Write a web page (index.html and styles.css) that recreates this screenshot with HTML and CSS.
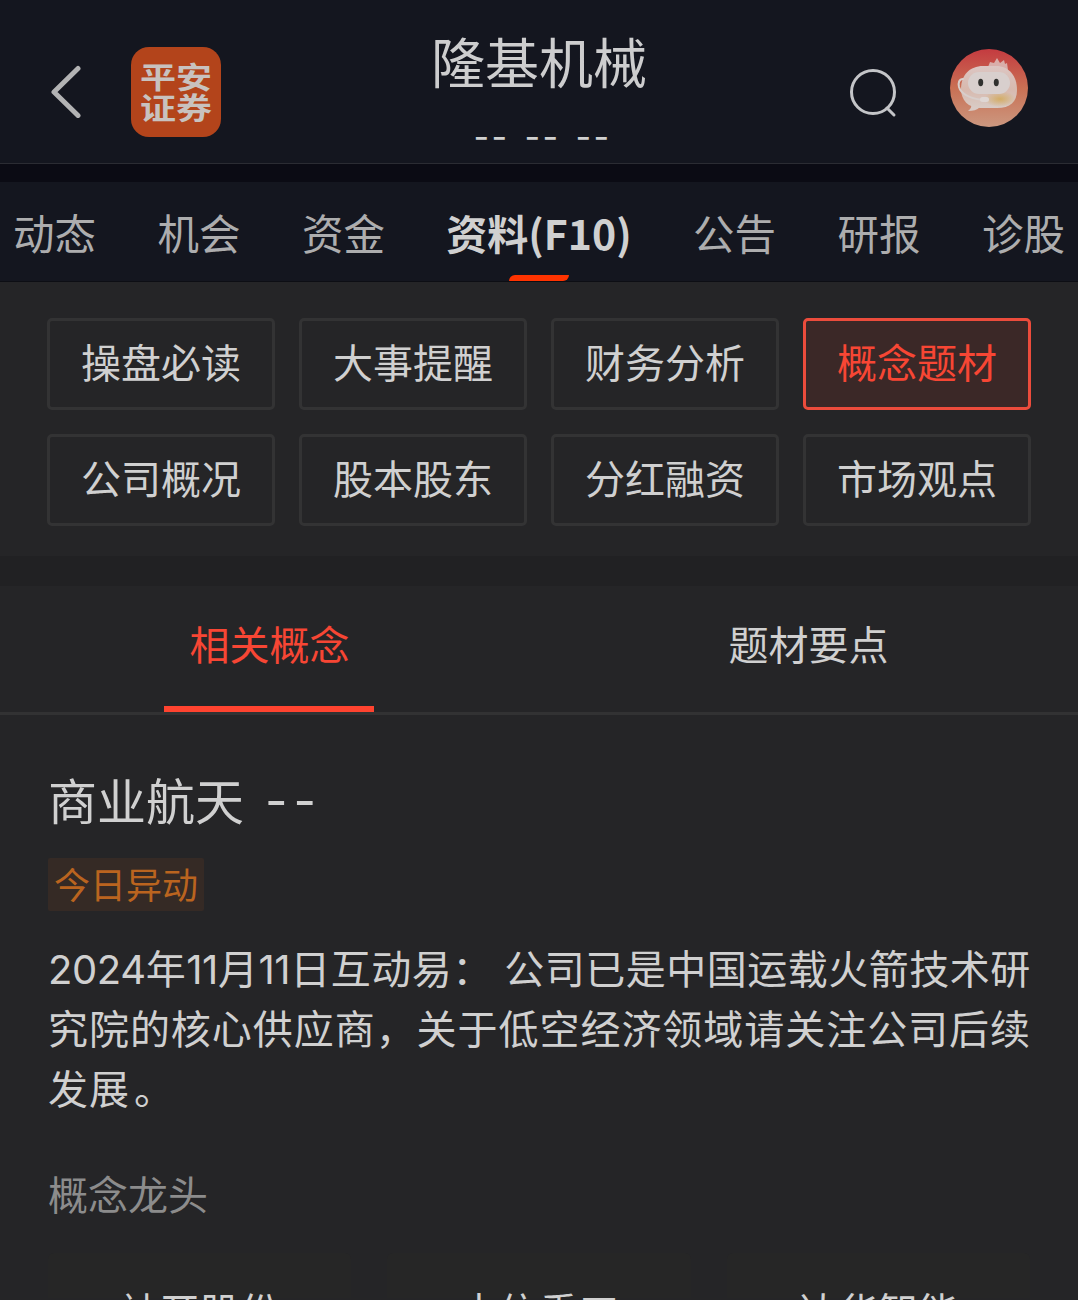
FILE: index.html
```html
<!DOCTYPE html>
<html lang="zh-CN">
    <head>
        <meta charset="UTF-8" />
        <meta name="viewport" content="width=device-width, initial-scale=1.0" />
        <title>隆基机械</title>
        <link rel="stylesheet" href="styles.css">
    </head>
    <body>
        <header class="header">
            <svg class="back" viewBox="0 0 40 60">
                <path d="M32 10.500 8 34l24 23.500" />
            </svg>
            <div class="logo"><span>平安</span><span>证券</span></div>
            <div class="stock">
                <h1>隆基机械</h1>
                <div class="quote"><span>--</span><span>--</span><span>--</span></div>
            </div>
            <svg class="search" viewBox="0 0 50 52">
                <circle cx="24" cy="24" r="21.500" />
                <path d="M38 40l7 7" />
            </svg>
            <svg class="avatar" viewBox="0 0 78 78">
                <defs>
                    <linearGradient id="sky" x1="0" y1="0" x2="0" y2="1">
                        <stop offset="0" stop-color="#c43b40" />
                        <stop offset=".5" stop-color="#c97054" />
                        <stop offset="1" stop-color="#cc9880" />
                    </linearGradient>
                    <linearGradient id="head" x1="0" y1="0" x2="0" y2="1">
                        <stop offset="0" stop-color="#dcc6c3" />
                        <stop offset=".55" stop-color="#d8b9ae" />
                        <stop offset="1" stop-color="#d8cbc5" />
                    </linearGradient>
                    <radialGradient id="glow">
                        <stop offset="0" stop-color="#d3ad66" />
                        <stop offset="1" stop-color="#d3ad66" stop-opacity="0" />
                    </radialGradient>
                </defs>
                <circle cx="39" cy="39" r="39" fill="url(#sky)" />
                <path d="M38 18l2-5 4 1 3-5 3 5 4-3 1 4 2-1 1 7z" fill="#d9aeaa" />
                <path d="M21 54c1 3 0 6-3 8 5 0 9-1 12-4z" fill="#d9cac5" />
                <path d="M33 17h13c13 0 21 10 21 24 0 12-7 18-20 18H31c-13 0-20-8-20-19 0-14 9-23 22-23z" fill="url(#head)" />
                <ellipse cx="50" cy="50" rx="16" ry="8" fill="url(#glow)" />
                <rect x="18" y="23" width="42" height="22" rx="11" fill="#d8cfcd" />
                <ellipse cx="30.700" cy="33.500" rx="2.500" ry="3.700" fill="#30302e" />
                <ellipse cx="46.300" cy="33.500" rx="2.500" ry="3.700" fill="#30302e" />
                <path d="M13 30c-4 0-5 4-4 8 2 7 10 11 23 13" fill="none" stroke="#d8cecb" stroke-width="2" />
                <rect x="30" y="48" width="9" height="5" rx="2.500" fill="#dfd7d4" />
            </svg>
        </header>
        <nav class="nav">
            <a>动态</a>
            <a>机会</a>
            <a>资金</a>
            <a class="active">资料(F10)</a>
            <a>公告</a>
            <a>研报</a>
            <a>诊股</a>
        </nav>
        <section class="menu">
            <a>操盘必读</a>
            <a>大事提醒</a>
            <a>财务分析</a>
            <a class="active">概念题材</a>
            <a>公司概况</a>
            <a>股本股东</a>
            <a>分红融资</a>
            <a>市场观点</a>
        </section>
        <div class="tabs">
            <a class="active">相关概念</a>
            <a>题材要点</a>
        </div>
        <main class="concept">
            <h2>商业航天 <span class="change">--</span></h2>
            <span class="tag">今日异动</span>
            <div class="desc">
                <p class="first"><span class="num">2024</span>年<span class="num">11</span>月<span class="num">11</span>日互动易<span class="colon">：</span>公司已是中国运载火箭技术研</p>
                <p>究院的核心供应商，关于低空经济领域请关注公司后续</p>
                <p class="last">发展<span class="stop">。</span></p>
            </div>
            <h3>概念龙头</h3>
            <div class="leaders">
                <div>神开股份</div>
                <div>中信重工</div>
                <div>达华智能</div>
            </div>
        </main>
    </body>
</html>
```

FILE: styles.css
```css
* {
    box-sizing: border-box;
}
body {
    margin: 0;
    height: 1300px;
    overflow: hidden;
    background-color: #252527;
    color: #d0d0d0;
    font-family: 'Noto Sans CJK SC', sans-serif;
}
h1,
h2,
h3,
p {
    margin: 0;
    font-weight: normal;
}
svg {
    display: block;
    fill: none;
    stroke-linecap: round;
    stroke-linejoin: round;
}
.header {
    display: flex;
    height: 164px;
    padding: 0 50px 0 46px;
    background-color: #14161f;
    border-bottom: 1px solid #2b2c33;
}
.back {
    width: 40px;
    height: 60px;
    margin-top: 58px;
    stroke: #b3b3b4;
    stroke-width: 5;
}
.logo {
    display: flex;
    flex-direction: column;
    align-items: center;
    width: 90px;
    height: 90px;
    margin: 47px 0 0 45px;
    padding-top: 13px;
    border-radius: 18px;
    background-color: #b3441b;
    color: #c8c2bf;
    font-size: 36px;
    font-weight: 700;
    line-height: 31px;
}
.logo span {
    transform: scaleY(0.82);
}
.stock {
    width: 260px;
    margin-left: 188px;
    padding-top: 33px;
    text-align: center;
}
.stock h1 {
    height: 58px;
    color: #cdcdce;
    font-size: 54px;
    line-height: 56px;
}
.quote {
    display: flex;
    justify-content: center;
    gap: 15px;
    padding: 26px 0 0 7px;
    font-family: Inter, sans-serif;
    font-size: 34px;
    letter-spacing: 2.4px;
    line-height: 40px;
}
.search {
    width: 50px;
    height: 52px;
    margin: 68px 0 0 180px;
    stroke: #c4c5c8;
    stroke-width: 3;
}
.avatar {
    width: 78px;
    height: 78px;
    margin: 49px 0 0 auto;
}
.nav {
    display: flex;
    justify-content: space-between;
    height: 118px;
    padding: 0 13px;
    background-color: #14161f;
    border-top: 18px solid #0b0b14;
    border-bottom: 1px solid #0d0e14;
    color: #adadae;
    font-size: 41.5px;
    line-height: 100px;
}
.nav .active {
    position: relative;
    color: #d0d0d0;
    font-size: 41px;
    font-weight: 700;
}
.nav .active::after {
    content: '';
    position: absolute;
    left: 50%;
    bottom: 0;
    width: 60px;
    height: 6px;
    margin-left: -30px;
    border-radius: 6px 0 6px 0;
    background-color: #ff3300;
}
.menu {
    display: grid;
    grid-template-columns: repeat(4, 228px);
    grid-auto-rows: 92px;
    gap: 24px;
    height: 274px;
    padding: 36px 47px 0;
}
.menu a {
    border: 3px solid #333334;
    border-radius: 5px;
    font-size: 40px;
    line-height: 81px;
    text-align: center;
}
.menu .active {
    border-color: #ec4c3c;
    background-color: #3b2827;
    color: #f74634;
}
.tabs {
    display: flex;
    height: 159px;
    border-top: 30px solid #212123;
    border-bottom: 3px solid #323233;
    font-size: 40px;
    line-height: 115px;
}
.tabs a {
    display: flex;
    flex: 1;
    flex-direction: column;
    align-items: center;
}
.tabs .active {
    color: #f74634;
}
.tabs .active::after {
    content: '';
    width: 210px;
    height: 6px;
    margin: 5px 1px 0 0;
    background-color: #ff432f;
}
.concept {
    padding: 49px 48px 0;
}
.concept h2 {
    font-size: 49px;
    line-height: 70px;
}
.change {
    margin-left: 10px;
    font-family: Inter, sans-serif;
    letter-spacing: 6px;
    line-height: 1;
    vertical-align: 2px;
}
.tag {
    display: block;
    width: 156px;
    height: 53px;
    margin-top: 24px;
    border-radius: 2px;
    background-color: #352a25;
    color: #ba641f;
    font-size: 36px;
    line-height: 50px;
    text-align: center;
}
.desc {
    margin-top: 26px;
    font-size: 40px;
    line-height: 60px;
}
.desc p {
    height: 60px;
    text-align-last: justify;
    white-space: nowrap;
}
.desc .first {
    letter-spacing: 0.5px;
    text-align-last: left;
}
.desc .last {
    letter-spacing: 1px;
    text-align-last: left;
}
.num {
    font-family: Inter, sans-serif;
    letter-spacing: -0.4px;
    line-height: 1;
}
.colon {
    display: inline-block;
    width: 52px;
    line-height: 1;
}
.stop {
    margin-left: 4px;
}
.concept h3 {
    margin-top: 46px;
    color: #8c8c8c;
    font-size: 40px;
    line-height: 60px;
}
.leaders {
    display: flex;
    gap: 36px;
    margin-top: 30px;
}
.leaders div {
    flex: 1;
    height: 45px;
    padding-top: 27px;
    border-radius: 6px 6px 0 0;
    background-color: #262626;
    font-size: 40px;
    line-height: 60px;
    text-align: center;
}
```
